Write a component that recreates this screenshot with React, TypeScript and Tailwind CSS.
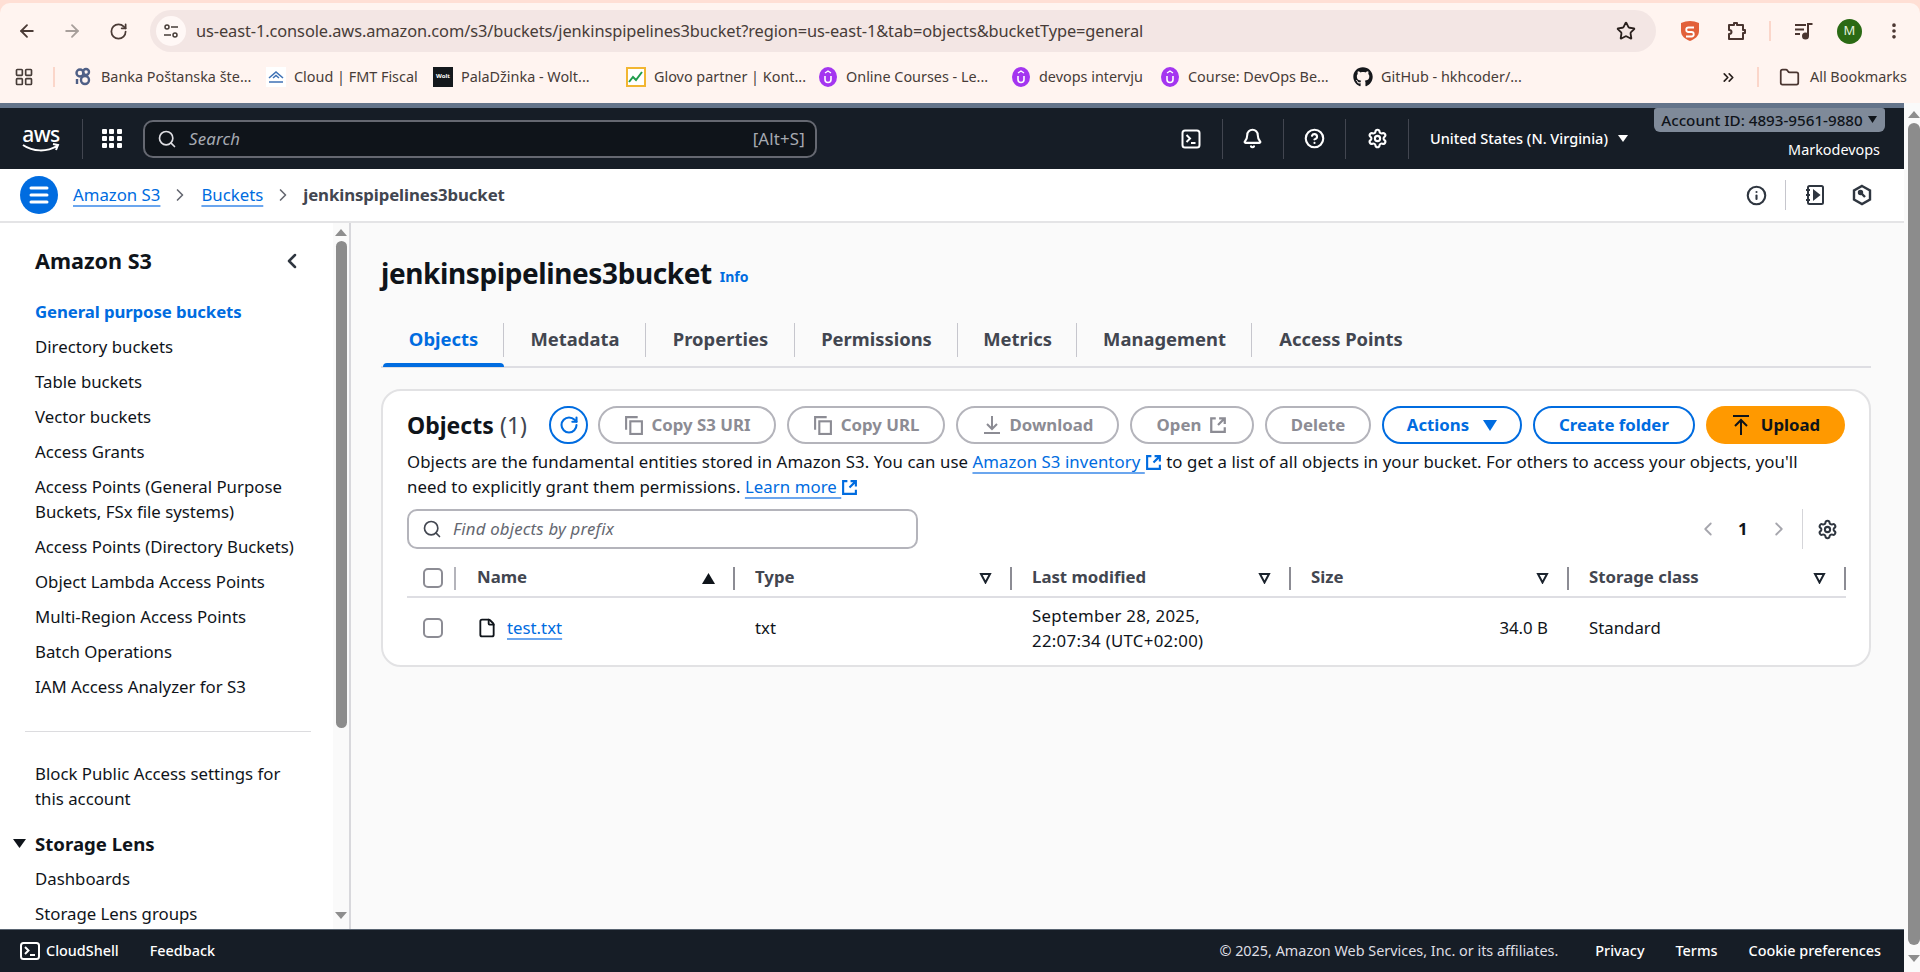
import React from "react";
import { ArrowLeft, ArrowRight, RotateCw, Star, EllipsisVertical, Search, Bell, CircleHelp, Settings, ChevronRight, ChevronLeft, ChevronsRight, Folder, Info, File, Menu, LayoutGrid } from "lucide-react";
import { FaGithub } from "react-icons/fa";

const Ext = ({ c = "#006ce0", s = 17 }: { c?: string; s?: number }) => (
  <svg width={s} height={s} viewBox="0 0 16 16" fill="none" stroke={c} strokeWidth="2" className="inline-block align-[-3px]">
    <path d="M6 2H2v12h12v-4M9 2h5v5M14 2 8 8" />
  </svg>
);
const Caret = () => (
  <svg width="13" height="12" viewBox="0 0 13 12" fill="none" stroke="#1b232d" strokeWidth="2"><path d="M2 2h9L6.5 10.5z" /></svg>
);
const Copy = () => (
  <svg width="20" height="20" viewBox="0 0 19 19" fill="none" stroke="#8c8c94" strokeWidth="2"><path d="M2 14V2h11" /><rect x="6" y="6" width="11" height="12" /></svg>
);
const U = () => (
  <svg width="18" height="20" viewBox="0 0 18 20"><ellipse cx="9" cy="10" rx="9" ry="10" fill="#a435f0" /><path d="M6 9v3.5a3 3 0 0 0 6 0V9" stroke="#fff" strokeWidth="1.6" fill="none" /><path d="M6 6l3-2 3 2" stroke="#fff" strokeWidth="1.4" fill="none" /></svg>
);
const Btn = ({ w, children, blue }: { w: string; children: React.ReactNode; blue?: boolean }) => (
  <div className={`${w} h-[38px] rounded-full border-2 flex items-center justify-center gap-[8px] font-bold text-[16.8px] ${blue ? "border-[#006ce0] text-[#006ce0]" : "border-[#b4b4bb] text-[#8c8c94]"}`}>
    {children}
  </div>
);
const Vsep = ({ c = "bg-[#8c8c94]" }: { c?: string }) => <div className={`w-[2px] h-[23px] ${c}`} />;
const Th = ({ w, label, icon }: { w: string; label: string; icon?: React.ReactNode }) => (
  <div className={`${w} h-full flex items-center justify-between pl-[20px] font-bold text-[#424650]`}>
    <span className="-translate-y-px">{label}</span>
    <div className="flex items-center gap-[18px]">{icon ?? <Caret />}<Vsep /></div>
  </div>
);
const Nav = ({ t, a }: { t: string; a?: boolean }) => (
  <div className={`py-[5px] leading-[25px] ${a ? "text-[#006ce0] font-bold tracking-[-0.1px]" : "text-[#0f141a]"}`}>{t}</div>
);
const Tab = ({ t, w, a, last }: { t: string; w: string; a?: boolean; last?: boolean }) => (
  <div className={`${w} h-full flex items-center justify-center relative font-bold text-[18.4px] ${a ? "text-[#006ce0]" : "text-[#424650]"}`}>
    <span>{t}</span>
    {!last && <div className="absolute right-0 top-[12px] h-[34px] w-px bg-[#c6c6cd]" />}
    {a && <div className="absolute left-0 right-0 bottom-0 h-[4px] rounded-t bg-[#006ce0]" />}
  </div>
);
const Bm = ({ w, icon, t }: { w: string; icon: React.ReactNode; t: string }) => (
  <div className={`${w} flex items-center gap-[8px] shrink-0`}>
    <div className="w-[20px] h-[20px] flex items-center justify-center shrink-0">{icon}</div>
    <span className="whitespace-nowrap">{t}</span>
  </div>
);
const Lnk = ({ children }: { children: React.ReactNode }) => (
  <span className="text-[#006ce0] underline decoration-[#6ba6ee] decoration-2 underline-offset-[4px]">{children}</span>
);

export default function App() {
  return (
    <div className="h-[972px] w-[1920px] overflow-hidden flex flex-col font-['Noto_Sans',sans-serif] text-[16.8px] bg-white">
      {/* Browser chrome */}
      <div className="h-[103px] bg-[#ffdfd5] pt-[3px] shrink-0">
        <div className="h-[100px] bg-[#fff4f0] rounded-t-[10px] flex flex-col text-[#473c38]">
          <div className="h-[56px] flex items-center shrink-0">
            <ArrowLeft size={20} strokeWidth={2.2} className="ml-[17px] text-[#4b3b36]" />
            <ArrowRight size={20} strokeWidth={2.2} className="ml-[25px] text-[#a89f9b]" />
            <RotateCw size={19} strokeWidth={2.2} className="ml-[27px] text-[#4b3b36]" />
            <div className="ml-[22px] w-[1506px] h-[42px] rounded-full bg-[#f3e6e4] flex items-center pl-[6px] pr-[20px]">
              <div className="w-[30px] h-[30px] rounded-full bg-[#fff8f6] flex items-center justify-center">
                <svg width="16" height="16" viewBox="0 0 16 16" fill="none" stroke="#473c38" strokeWidth="1.5"><circle cx="4" cy="4" r="2" /><path d="M8 4h7M1 12h7" /><circle cx="12" cy="12" r="2" /></svg>
              </div>
              <span className="ml-[10px] text-[16.4px] tracking-[-0.1px] whitespace-nowrap flex-1">us-east-1.console.aws.amazon.com/s3/buckets/jenkinspipelines3bucket?region=us-east-1&amp;tab=objects&amp;bucketType=general</span>
              <Star size={20} strokeWidth={2.2} className="text-[#2a211e]" />
            </div>
            <div className="ml-[24px] w-[20px] h-[22px] flex items-center justify-center">
              <svg width="20" height="22" viewBox="0 0 20 22"><path d="M10 1c3 0 6 .8 9 2v8c0 5-4 8-9 10-5-2-9-5-9-10V3c3-1.2 6-2 9-2z" fill="#e2603a" /><path d="M14 7.5H8.500a2.200 2.200 0 0 0 0 4.500h3a2.200 2.200 0 0 1 0 4.500H6" fill="none" stroke="#fff" strokeWidth="1.8" /></svg>
            </div>
            <svg width="22" height="22" viewBox="0 0 22 22" fill="none" stroke="#4a3530" strokeWidth="2" strokeLinejoin="round" className="ml-[25px]"><path d="M4 5h5V3h3v2h6v5h2v3h-2v6H4v-5c2 0 2.5-1 2.5-2S6 10 4 10z" /></svg>
            <div className="ml-[22px] w-[2px] h-[20px] bg-[#fbd6ca]" />
            <svg width="20" height="18" viewBox="0 0 20 18" fill="none" stroke="#4a3530" strokeWidth="2" className="ml-[23px]"><path d="M1 3h11M1 7.5h9M1 12h5M14 14V2h4.500" /><circle cx="11.5" cy="14" r="2.5" fill="#4a3530" /></svg>
            <div className="ml-[23px] w-[25px] h-[25px] rounded-full bg-[#2b6a14] text-[#e4f0de] text-[13px] flex items-center justify-center">M</div>
            <EllipsisVertical size={20} strokeWidth={2.4} className="ml-[22px] text-[#4a3530]" />
          </div>
          <div className="h-[44px] flex items-center text-[14.4px] pb-[8px]">
            <LayoutGrid size={20} strokeWidth={2} className="ml-[14px] shrink-0 text-[#473c38]" />
            <div className="ml-[19px] mr-[18px] w-[2px] h-[20px] bg-[#fbd6ca]" />
            <Bm w="w-[193px]" t="Banka Poštanska šte..." icon={<svg width="18" height="20" viewBox="0 0 18 20" fill="none" stroke="#4f5f86" strokeWidth="2.4"><circle cx="6" cy="6" r="3.5" /><circle cx="12" cy="5" r="3" /><circle cx="11" cy="13" r="4" /><path d="M3 12v5" /></svg>} />
            <Bm w="w-[167px]" t="Cloud | FMT Fiscal" icon={<svg width="20" height="20" viewBox="0 0 20 20" fill="none" stroke="#3f72b5" strokeWidth="1.6"><rect width="20" height="20" fill="#fff" stroke="none" /><path d="M3 11l7-6 7 6M7 11l3-2.5 3 2.500M3 15h14" /></svg>} />
            <Bm w="w-[193px]" t="PalaDžinka - Wolt..." icon={<div className="w-[20px] h-[20px] bg-[#14181c] text-white text-[6px] flex items-center justify-center font-bold">Wolt</div>} />
            <Bm w="w-[192px]" t="Glovo partner | Kont..." icon={<svg width="20" height="20" viewBox="0 0 20 20" fill="none"><rect x="1" y="1" width="18" height="18" fill="#fff" stroke="#f2b632" strokeWidth="2" /><path d="M3 15l4-5 3 3 6-8" stroke="#1f9d4d" strokeWidth="2" /></svg>} />
            <Bm w="w-[193px]" t="Online Courses - Le..." icon={<U />} />
            <Bm w="w-[149px]" t="devops intervju" icon={<U />} />
            <Bm w="w-[193px]" t="Course: DevOps Be..." icon={<U />} />
            <Bm w="w-[367px]" t="GitHub - hkhcoder/..." icon={<FaGithub size={20} className="text-[#16181c]" />} />
            <ChevronsRight size={17} strokeWidth={2.4} className="shrink-0 text-[#2a211e]" />
            <div className="ml-[20px] mr-[20px] w-[2px] h-[20px] bg-[#fbd6ca] shrink-0" />
            <Folder size={21} strokeWidth={2} className="shrink-0 text-[#4a3530]" />
            <span className="ml-[10px] whitespace-nowrap">All Bookmarks</span>
          </div>
        </div>
      </div>

      <div className="flex-1 flex min-h-0">
        <div className="w-[1904px] flex flex-col min-h-0">
          {/* AWS header */}
          <div className="h-[66px] shrink-0 bg-[#161d26] border-t-[5px] border-[#64748a] relative flex items-center text-white">
            <div className="ml-[21px] w-[40px] flex flex-col items-center">
              <span className="text-[21px] leading-[18px] font-medium tracking-[-0.5px]">aws</span>
              <svg width="40" height="10" viewBox="0 0 40 10" fill="none" stroke="#fff" strokeWidth="2"><path d="M2 2c10 7 24 7 34 1M32 1l5 1-2 5" /></svg>
            </div>
            <div className="ml-[21px] w-px h-[40px] bg-[#424650]" />
            <div className="ml-[19px] w-[20px] grid grid-cols-3 gap-[2px]">
              {[0, 1, 2, 3, 4, 5, 6, 7, 8].map((i) => <div key={i} className="h-[5px] w-[5px] rounded-[1px] bg-white" />)}
            </div>
            <div className="ml-[21px] w-[674px] h-[38px] rounded-[10px] border-2 border-[#656871] bg-[#0f141a] flex items-center pl-[12px] pr-[10px] text-[#a6aab2] tracking-[0.2px]">
              <Search size={20} className="text-[#dedee3]" />
              <span className="ml-[12px] italic flex-1">Search</span>
              <span>[Alt+S]</span>
            </div>
            <div className="ml-[363px] w-[22px] h-[22px] flex items-center justify-center">
              <svg width="20" height="20" viewBox="0 0 20 20" fill="none" stroke="#fff" strokeWidth="2"><rect x="1.5" y="1.5" width="17" height="17" rx="2.5" /><path d="M5.5 6l3.5 3.5L5.5 13M10 14h4.500" /></svg>
            </div>
            <div className="ml-[20px] w-px h-[40px] bg-[#424650]" />
            <Bell size={21} strokeWidth={2.4} className="ml-[19px]" />
            <div className="ml-[20px] w-px h-[40px] bg-[#424650]" />
            <CircleHelp size={21} strokeWidth={2.4} className="ml-[20px]" />
            <div className="ml-[20px] w-px h-[40px] bg-[#424650]" />
            <Settings size={21} strokeWidth={2.4} className="ml-[21px]" />
            <div className="ml-[20px] w-px h-[40px] bg-[#424650]" />
            <span className="ml-[21px] text-[14.5px] whitespace-nowrap font-medium">United States (N. Virginia)</span>
            <svg width="12" height="9" viewBox="0 0 12 9" className="ml-[9px]"><path d="M1 1h10L6 8z" fill="#fff" /></svg>
            <div className="absolute left-[1654px] top-[0px] w-[231px] h-[24px] rounded-b-[6px] rounded-t-[3px] bg-[#7f8a99] text-[#0f141a] text-[15.2px] font-medium flex items-center justify-center gap-[4px] whitespace-nowrap">
              Account ID: 4893-9561-9880
              <svg width="11" height="8" viewBox="0 0 11 8"><path d="M1 0h9L5.5 7z" fill="#0f141a" /></svg>
            </div>
            <span className="absolute right-[24px] top-[30px] text-[14.4px] leading-[24px]">Markodevops</span>
          </div>

          {/* Breadcrumb */}
          <div className="h-[54px] shrink-0 bg-white border-b-2 border-[#e4e4e6] flex items-center">
            <div className="ml-[20px] w-[38px] h-[38px] rounded-full bg-[#006ce0] flex items-center justify-center">
              <Menu size={24} strokeWidth={3} className="text-white" />
            </div>
            <span className="ml-[15px]"><Lnk>Amazon S3</Lnk></span>
            <ChevronRight size={20} className="ml-[10px] text-[#656871]" />
            <span className="ml-[11px]"><Lnk>Buckets</Lnk></span>
            <ChevronRight size={20} className="ml-[10px] text-[#656871]" />
            <span className="ml-[10px] font-bold text-[#424650] tracking-[-0.1px]">jenkinspipelines3bucket</span>
            <div className="flex-1" />
            <Info size={21} strokeWidth={2.4} className="text-[#2f3640]" />
            <div className="ml-[18px] w-px h-[30px] bg-[#c6c6cd]" />
            <svg width="22" height="22" viewBox="0 0 22 22" fill="none" stroke="#2f3640" strokeWidth="2" className="ml-[18px]"><rect x="4" y="2" width="15" height="18" rx="1.5" /><path d="M2 6h4M2 11h4M2 16h4" /><path d="M10 7l5 4-5 4z" fill="#2f3640" /></svg>
            <svg width="20" height="22" viewBox="0 0 20 22" fill="none" stroke="#2f3640" strokeWidth="2.4" className="ml-[26px] mr-[32px]"><path d="M10 2l8 4.5v9L10 20l-8-4.5v-9z" /><path d="M8 8l5 5" /><circle cx="8.5" cy="8.5" r="1.500" fill="#2f3640" /></svg>
          </div>

          <div className="flex-1 flex min-h-0">
            {/* Sidebar */}
            <div className="w-[351px] shrink-0 flex bg-white border-r-2 border-[#d8d8dc] overflow-hidden">
              <div className="w-[333px] shrink-0 pt-[26px] overflow-hidden">
                <div className="pl-[35px] pr-[29px] flex items-center justify-between h-[24px]">
                  <span className="font-bold text-[21.6px] text-[#0f141a]">Amazon S3</span>
                  <ChevronLeft size={24} strokeWidth={2.5} className="text-[#2f3640]" />
                </div>
                <div className="mt-[21px] pl-[35px] pr-[20px]">
                  <Nav t="General purpose buckets" a />
                  <Nav t="Directory buckets" />
                  <Nav t="Table buckets" />
                  <Nav t="Vector buckets" />
                  <Nav t="Access Grants" />
                  <Nav t="Access Points (General Purpose Buckets, FSx file systems)" />
                  <Nav t="Access Points (Directory Buckets)" />
                  <Nav t="Object Lambda Access Points" />
                  <Nav t="Multi-Region Access Points" />
                  <Nav t="Batch Operations" />
                  <Nav t="IAM Access Analyzer for S3" />
                </div>
                <div className="mt-[27px] ml-[25px] w-[286px] h-px bg-[#dcdcdf]" />
                <div className="mt-[24px] pl-[35px] pr-[30px]">
                  <Nav t="Block Public Access settings for this account" />
                </div>
                <div className="mt-[10px] pl-[13px] flex items-center h-[35px] font-bold text-[18.6px] text-[#0f141a]">
                  <svg width="13" height="9" viewBox="0 0 13 9"><path d="M0 0h13L6.5 9z" fill="#0f141a" /></svg>
                  <span className="ml-[9px]">Storage Lens</span>
                </div>
                <div className="pl-[35px]">
                  <Nav t="Dashboards" />
                  <Nav t="Storage Lens groups" />
                </div>
              </div>
              <div className="w-[16px] flex flex-col items-center pt-[6px] bg-[#fafafa]">
                <svg width="12" height="7" viewBox="0 0 12 7"><path d="M0 7h12L6 0z" fill="#8e8e8e" /></svg>
                <div className="mt-[5px] w-[11px] h-[487px] rounded-full bg-[#8c8c8c]" />
                <svg width="12" height="7" viewBox="0 0 12 7" className="mt-[184px]"><path d="M0 0h12L6 7z" fill="#8e8e8e" /></svg>
              </div>
            </div>

            {/* Main */}
            <div className="flex-1 bg-[#fafafa] pl-[30px] pr-[33px] pt-[30px] text-[#0f141a] min-w-0">
              <div className="h-[40px] flex items-center">
                <span className="text-[28px] font-bold tracking-[-0.4px]">jenkinspipelines3bucket</span>
                <span className="ml-[8px] mt-[6px] text-[14px] font-bold text-[#006ce0]">Info</span>
              </div>
              <div className="mt-[18px] h-[57px] border-b-2 border-[#dedee3] flex">
                <div className="h-[56px] flex pl-[2px]">
                  <Tab t="Objects" w="w-[121px]" a />
                  <Tab t="Metadata" w="w-[142px]" />
                  <Tab t="Properties" w="w-[149px]" />
                  <Tab t="Permissions" w="w-[163px]" />
                  <Tab t="Metrics" w="w-[119px]" />
                  <Tab t="Management" w="w-[175px]" />
                  <Tab t="Access Points" w="w-[178px]" last />
                </div>
              </div>
              <div className="mt-[21px] h-[278px] rounded-[20px] border-2 border-[#e2e2e4] bg-white pl-[24px] pr-[23px] pt-[15px]">
                <div className="flex items-center h-[38px]">
                  <span className="text-[23px] font-bold w-[93px]">Objects</span>
                  <span className="text-[23px] text-[#424650] font-normal w-[49px]">(1)</span>
                  <div className="w-[39px] h-[38px] rounded-full border-2 border-[#006ce0] flex items-center justify-center">
                    <RotateCw size={20} strokeWidth={2.5} className="text-[#006ce0]" />
                  </div>
                  <div className="ml-[10px] flex gap-[11px] items-center">
                    <Btn w="w-[178px]"><Copy />Copy S3 URI</Btn>
                    <Btn w="w-[158px]"><Copy />Copy URL</Btn>
                    <Btn w="w-[163px]">
                      <svg width="20" height="20" viewBox="0 0 20 20" fill="none" stroke="#8c8c94" strokeWidth="2"><path d="M10 1v12M5 9l5 5 5-5M2 18h16" /></svg>
                      Download
                    </Btn>
                    <Btn w="w-[124px]">Open<Ext c="#8c8c94" s={18} /></Btn>
                    <Btn w="w-[106px]">Delete</Btn>
                    <Btn w="w-[140px]" blue>Actions<svg width="14" height="11" viewBox="0 0 14 11" className="ml-[6px]"><path d="M0 0h14L7 11z" fill="#006ce0" /></svg></Btn>
                    <Btn w="w-[162px]" blue>Create folder</Btn>
                    <div className="w-[139px] h-[38px] rounded-full bg-[#ff9900] flex items-center justify-center gap-[10px] font-bold text-[#0f141a]">
                      <svg width="20" height="22" viewBox="0 0 20 22" fill="none" stroke="#0f141a" strokeWidth="2"><path d="M2 2h16M10 21V6M4 12l6-6 6 6" /></svg>
                      Upload
                    </div>
                  </div>
                </div>
                <div className="mt-[5px] mr-[32px] leading-[25px] tracking-[0.07px]">
                  Objects are the fundamental entities stored in Amazon S3. You can use <Lnk>Amazon S3 inventory <Ext /></Lnk> to get a list of all objects in your bucket. For others to access your objects, you'll need to explicitly grant them permissions. <Lnk>Learn more <Ext /></Lnk>
                </div>
                <div className="mt-[10px] flex items-center justify-between">
                  <div className="w-[511px] h-[40px] rounded-[10px] border-2 border-[#b4b4bb] flex items-center px-[13px] bg-white">
                    <Search size={20} className="text-[#424650]" />
                    <span className="ml-[11px] italic text-[#656871] tracking-[0.2px]">Find objects by prefix</span>
                  </div>
                  <div className="flex items-center h-[40px]">
                    <ChevronLeft size={22} className="text-[#a6a6ad]" />
                    <span className="ml-[19px] w-[10px] font-bold">1</span>
                    <ChevronRight size={22} className="ml-[20px] text-[#a6a6ad]" />
                    <div className="ml-[12px] w-px h-[40px] bg-[#d5d5d9]" />
                    <Settings size={21} strokeWidth={2.3} className="ml-[14px] mr-[8px] text-[#2f3640]" />
                  </div>
                </div>
                <div className="mt-[11px] h-[38px] border-b-2 border-[#dedee3] flex items-center">
                  <div className="w-[50px] h-full flex items-center justify-between pl-[16px] pr-[1px]">
                    <div className="w-[20px] h-[20px] rounded-[5px] border-2 border-[#8c8c94] bg-white" />
                    <Vsep c="bg-[#b4b4bb]" />
                  </div>
                  <Th w="w-[278px]" label="Name" icon={<svg width="13" height="11" viewBox="0 0 13 11"><path d="M0 11h13L6.5 0z" fill="#0f141a" /></svg>} />
                  <Th w="w-[277px]" label="Type" />
                  <Th w="w-[279px]" label="Last modified" />
                  <Th w="w-[278px]" label="Size" />
                  <Th w="w-[277px]" label="Storage class" />
                </div>
                <div className="h-[60px] flex items-center">
                  <div className="w-[50px] pl-[16px]">
                    <div className="w-[20px] h-[20px] rounded-[5px] border-2 border-[#8c8c94] bg-white" />
                  </div>
                  <div className="w-[278px] pl-[20px] flex items-center gap-[10px]">
                    <File size={20} strokeWidth={2.2} className="text-[#0f141a]" />
                    <Lnk>test.txt</Lnk>
                  </div>
                  <div className="w-[277px] pl-[20px]">txt</div>
                  <div className="w-[279px] pl-[20px] leading-[25px] tracking-[0.3px]">September 28, 2025,<br />22:07:34 (UTC+02:00)</div>
                  <div className="w-[278px] pr-[21px] text-right">34.0 B</div>
                  <div className="w-[277px] pl-[20px]">Standard</div>
                </div>
              </div>
            </div>
          </div>

          {/* Footer */}
          <div className="h-[43px] shrink-0 bg-[#161d26] border-t border-[#5a6572] flex items-center text-white text-[14.4px]">
            <div className="ml-[20px] w-[20px] h-[20px]">
              <svg width="20" height="20" viewBox="0 0 20 20" fill="none" stroke="#fff" strokeWidth="2"><rect x="1" y="2" width="18" height="16" rx="2.5" /><path d="M5 6l3.5 3.5L5 13M10 14h5" /></svg>
            </div>
            <span className="ml-[6px] font-medium">CloudShell</span>
            <span className="ml-[31px] font-medium">Feedback</span>
            <div className="flex-1" />
            <span className="text-[#dedee3]">© 2025, Amazon Web Services, Inc. or its affiliates.</span>
            <span className="ml-[37px] font-medium">Privacy</span>
            <span className="ml-[31px] font-medium">Terms</span>
            <span className="ml-[31px] mr-[23px] font-medium">Cookie preferences</span>
          </div>
        </div>

        {/* Page scrollbar */}
        <div className="w-[16px] bg-[#fafafa] flex flex-col items-center pt-[8px] pl-[4px]">
          <svg width="12" height="7" viewBox="0 0 12 7"><path d="M0 7h12L6 0z" fill="#8e8e8e" /></svg>
          <div className="mt-[5px] w-[12px] h-[822px] rounded-full bg-[#8c8c8c]" />
          <svg width="12" height="7" viewBox="0 0 12 7" className="mt-[10px]"><path d="M0 0h12L6 7z" fill="#8e8e8e" /></svg>
        </div>
      </div>
    </div>
  );
}
